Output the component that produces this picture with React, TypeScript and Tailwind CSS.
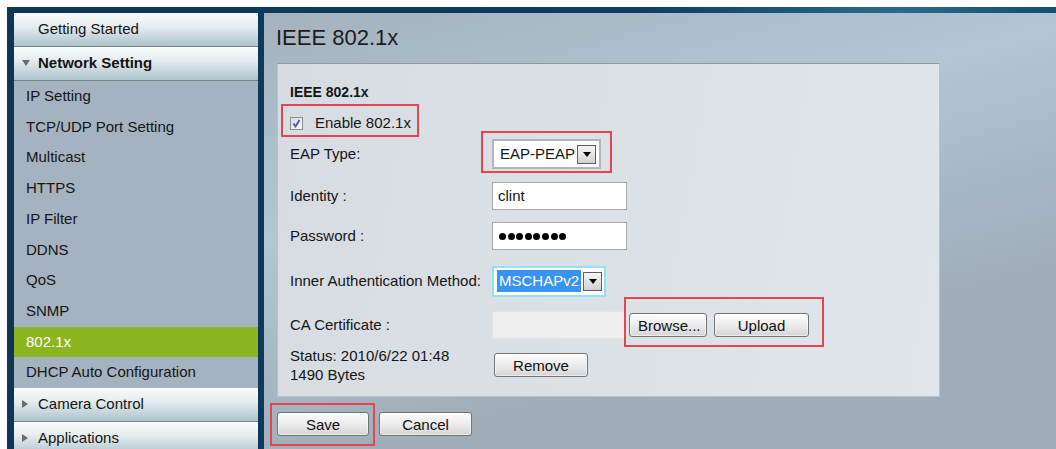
import type { ReactNode } from "react"

const networkItems = [
  "IP Setting",
  "TCP/UDP Port Setting",
  "Multicast",
  "HTTPS",
  "IP Filter",
  "DDNS",
  "QoS",
  "SNMP",
  "802.1x",
  "DHCP Auto Configuration",
]

function Caret({ open }: { open?: boolean }) {
  return open ? (
    <svg width="8" height="6" viewBox="0 0 8 6">
      <path d="M0 0h8L4 6z" fill="#6b6b6b" />
    </svg>
  ) : (
    <svg width="6" height="8" viewBox="0 0 6 8">
      <path d="M0 0l6 4-6 4z" fill="#6b6b6b" />
    </svg>
  )
}

function NavHeader({ label, caret, bold }: { label: string; caret?: ReactNode; bold?: boolean }) {
  return (
    <div className="h-[34px] shrink-0 flex items-center pl-[8px] pb-[2px] border-y border-white border-b-[#71858f] bg-[linear-gradient(#f8fafb,#e4ecef_40%,#aec3cd)]">
      <span className="w-[16px] flex items-center">{caret}</span>
      <span className={bold ? "font-bold" : ""}>{label}</span>
    </div>
  )
}

function Btn({ children, className = "" }: { children: ReactNode; className?: string }) {
  return (
    <button
      className={`h-[24px] rounded-[3px] border border-[#747474] bg-[linear-gradient(#fdfdfd,#ececec_50%,#d5d5d5)] text-[15px] leading-none text-[#111] shadow-[inset_0_0_0_1px_#ffffff80] ${className}`}
    >
      {children}
    </button>
  )
}

function DropArrow() {
  return (
    <span className="w-[19px] h-[19px] border border-[#5f5f5f] bg-[linear-gradient(#f6f6f6,#d2d2d2)] flex items-center justify-center">
      <svg width="8" height="5" viewBox="0 0 8 5">
        <path d="M0 0h8L4 5z" fill="#000" />
      </svg>
    </span>
  )
}

function Mark({ className }: { className: string }) {
  return <span className={`absolute border-2 border-[#e2474f] pointer-events-none ${className}`} />
}

function Row({ label, height, className = "", children }: { label: ReactNode; height: string; className?: string; children: ReactNode }) {
  return (
    <div className={`flex items-center ${height} ${className}`}>
      <div className="w-[202px] shrink-0">{label}</div>
      {children}
    </div>
  )
}

export default function App() {
  return (
    <div className="w-[1056px] h-[449px] overflow-hidden bg-white pt-[7px] pl-[7px] font-['Liberation_Sans',Arial,sans-serif] text-[15px] text-[#151515]">
      <div className="h-[442px] flex gap-[6px] pt-[6px] pl-[7px] bg-[linear-gradient(90deg,#0d3656,#0f3d60_60%,#2a6a8c_85%,#174d70)]">
        {/* Left navigation */}
        <aside className="w-[244px] shrink-0 flex flex-col bg-[#a5b2bf]">
          <NavHeader label="Getting Started" />
          <NavHeader label="Network Setting" caret={<Caret open />} bold />
          <ul>
            {networkItems.map((item) => (
              <li
                key={item}
                className={`h-[30.7px] flex items-center pl-[12px] ${
                  item === "802.1x" ? "bg-[#8cb51f] text-white" : "bg-[#a5b2bf]"
                }`}
              >
                {item}
              </li>
            ))}
          </ul>
          <NavHeader label="Camera Control" caret={<Caret />} />
          <NavHeader label="Applications" caret={<Caret />} />
        </aside>

        {/* Main content */}
        <main className="flex-1 pt-[12px] pl-[12px] bg-[linear-gradient(165deg,#a4b2be_0%,#b2c7d2_35%,#a7b8c4_55%,#a0acb8_75%)]">
          <h1 className="text-[22px] leading-[26px] text-[#1c1c1c]">IEEE 802.1x</h1>

          <section className="mt-[12px] ml-[1px] w-[663px] h-[334px] border border-[#b9c2ca] border-t-[#8d9aa4] bg-[linear-gradient(100deg,#d7dce2,#dde2e7_60%,#dfe6eb)] pt-[18px] pl-[12px]">
            <h2 className="font-bold text-[14px] leading-[20px]">IEEE 802.1x</h2>

            <div className="relative mt-[11px] h-[20px] flex items-center gap-[12px] w-fit">
              <span className="w-[13px] h-[13px] border border-[#8e8f8f] bg-[linear-gradient(135deg,#d8d8dc,#f8f8f8)] flex items-center justify-center">
                <svg width="9" height="9" viewBox="0 0 9 9">
                  <path d="M1.5 4.5l2 3 4-6.5" fill="none" stroke="#4450b0" strokeWidth="1.7" />
                </svg>
              </span>
              <span>Enable 802.1x</span>
              <Mark className="-left-[9px] -top-[9px] w-[138px] h-[33px]" />
            </div>

            <Row label="EAP Type:" height="h-[30px]" className="mt-[6px]">
              <div className="relative">
                <div className="w-[109px] h-[30px] border-2 border-[#b4b4b4] bg-white flex items-center justify-between pl-[6px] pr-[3px]">
                  <span>EAP-PEAP</span>
                  <DropArrow />
                </div>
                <Mark className="-left-[11px] -top-[8px] w-[131px] h-[42px]" />
              </div>
            </Row>

            <Row label="Identity :" height="h-[28px]" className="mt-[13px]">
              <div className="w-[135px] h-[28px] border border-[#a9a9a9] bg-white flex items-center pl-[5px]">clint</div>
            </Row>

            <Row label="Password :" height="h-[28px]" className="mt-[12px]">
              <div className="w-[135px] h-[28px] border border-[#a9a9a9] bg-white flex items-center gap-[1.6px] pl-[6px]">
                {Array.from({ length: 8 }, (_, i) => (
                  <span key={i} className="w-[7px] h-[7px] rounded-full bg-black" />
                ))}
              </div>
            </Row>

            <Row label="Inner Authentication Method:" height="h-[30px]" className="mt-[16px]">
              <div className="w-[114px] h-[31px] border-2 border-[#8ee4f4] bg-white flex items-center justify-between pl-[3px] pr-[2px]">
                <span className="bg-[#3993f3] text-white px-[2px] leading-[22px]">MSCHAPv2</span>
                <DropArrow />
              </div>
            </Row>

            <Row label="CA Certificate :" height="h-[28px]" className="mt-[15px]">
              <div className="w-[133px] h-[28px] bg-[#eeeeee] border border-[#e4e4e4]" />
              <div className="relative ml-[4px] flex gap-[7px]">
                <Btn className="w-[78px] text-left pl-[8px]">Browse...</Btn>
                <Btn className="w-[95px]">Upload</Btn>
                <Mark className="-left-[5px] -top-[16px] w-[200px] h-[50px]" />
              </div>
            </Row>

            <Row
              label={
                <div className="leading-[19px]">
                  <div>Status: 2010/6/22 01:48</div>
                  <div>1490 Bytes</div>
                </div>
              }
              height="h-[38px]"
              className="mt-[7px]"
            >
              <Btn className="w-[94px] ml-[2px]">Remove</Btn>
            </Row>
          </section>

          <div className="mt-[15px] ml-[1px] flex gap-[10px]">
            <div className="relative">
              <Btn className="w-[92px]">Save</Btn>
              <Mark className="-left-[7px] -top-[9px] w-[105px] h-[43px]" />
            </div>
            <Btn className="w-[93px]">Cancel</Btn>
          </div>
        </main>
      </div>
    </div>
  )
}
